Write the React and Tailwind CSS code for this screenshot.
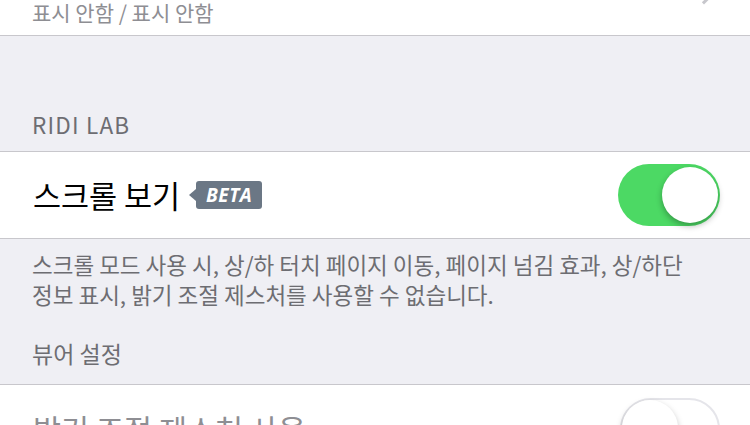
const font = { fontFamily: '"Noto Sans CJK KR", "Noto Sans", sans-serif' };

function Toggle({ on }) {
  return on ? (
    <div className="relative h-[62px] w-[102px] rounded-full bg-[#4cd964]">
      <div className="absolute right-[2px] top-[3px] h-[56px] w-[56px] rounded-full bg-white shadow-[0_3px_6px_rgba(0,0,0,0.3)]" />
    </div>
  ) : (
    <div className="relative h-[62px] w-[100px] rounded-full border-2 border-[#e5e5ea] bg-white">
      <div className="absolute left-0 top-0 h-[56px] w-[56px] rounded-full bg-white shadow-[0_3px_6px_rgba(0,0,0,0.25)]" />
    </div>
  );
}

function BetaBadge() {
  return (
    <div className="ml-[9px] flex items-center">
      <div className="h-0 w-0 border-y-[6px] border-r-[7px] border-y-transparent border-r-[#6b7785]" />
      <div
        className="flex h-[28px] w-[66px] items-center justify-center rounded-[3px] bg-[#6b7785] text-[19px] font-bold italic tracking-[0.5px] text-white"
        style={{ fontFamily: '"Open Sans", "Liberation Sans", sans-serif' }}
      >
        BETA
      </div>
    </div>
  );
}

export default function App() {
  return (
    <div className="h-[425px] w-[750px] overflow-hidden bg-[#efeff4]" style={font}>
      {/* previous cell */}
      <div className="relative h-[36px] border-b border-[#c8c7cc] bg-white">
        <p className="relative -top-[2px] pl-[32px] text-[21px] leading-[28px] text-[#8e8e93]">표시 안함 / 표시 안함</p>
        <div className="absolute right-[40px] -top-[10px] h-[12px] w-[12px] rotate-45 border-r-[3px] border-t-[3px] border-[#c7c7cc]" />
      </div>

      {/* RIDI LAB */}
      <div className="h-[115px] pl-[32px] pt-[74px]">
        <span className="text-[22.5px] leading-[28px] tracking-[1.2px] text-[#6d6d72]">RIDI LAB</span>
      </div>
      <div className="flex h-[88px] items-center justify-between border-y border-[#c8c7cc] bg-white pl-[33px] pr-[30px]">
        <div className="flex items-center">
          <span className="text-[30.5px] leading-[36px] text-black">스크롤 보기</span>
          <BetaBadge />
        </div>
        <Toggle on />
      </div>
      <p className="pl-[32px] pr-[20px] pt-[10px] text-[22.5px] leading-[30px] text-[#6d6d72]">
        스크롤 모드 사용 시, 상/하 터치 페이지 이동, 페이지 넘김 효과, 상/하단
        <br />
        정보 표시, 밝기 조절 제스처를 사용할 수 없습니다.
      </p>

      {/* 뷰어 설정 */}
      <div className="h-[75px] pl-[32px] pt-[30px]">
        <span className="text-[23px] leading-[28px] text-[#6d6d72]">뷰어 설정</span>
      </div>
      <div className="flex h-[88px] items-center justify-between border-t border-[#c8c7cc] bg-white pl-[33px] pr-[30px]">
        <span className="text-[30.5px] leading-[36px] text-[#8e8e93]">밝기 조절 제스처 사용</span>
        <Toggle on={false} />
      </div>
    </div>
  );
}
